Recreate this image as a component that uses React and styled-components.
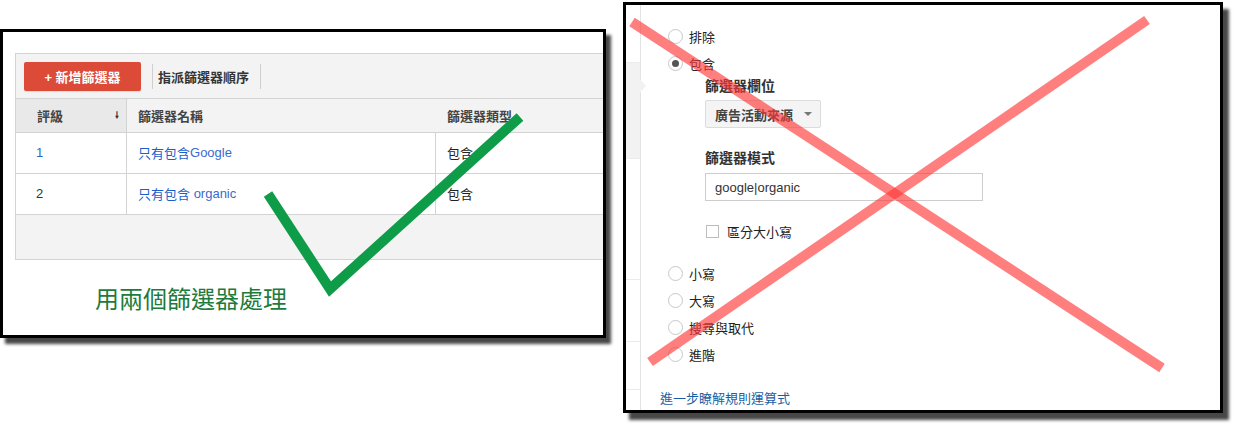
import React from 'react';
import styled, {createGlobalStyle} from 'styled-components';

const FONT = `"Liberation Sans", Arial, "Noto Sans CJK TC", sans-serif`;

const GlobalStyle = createGlobalStyle`
  body {
    margin: 0;
    background: #fff;
    font-family: ${FONT};
  }
`;

const COLUMNS = '111px 309px 1fr';

const filters = [
  {rank: '1', rankBlue: true, name: '只有包含', term: 'Google', type: '包含'},
  {rank: '2', rankBlue: false, name: '只有包含 ', term: 'organic', type: '包含'},
];

const lowerOptions = ['小寫', '大寫', '搜尋與取代', '進階'];

export default function App() {
  return (
    <Page>
      <GlobalStyle />
      <LeftPanel>
        <TableBox>
          <Toolbar>
            <AddButton>+ 新增篩選器</AddButton>
            <ToolDivider />
            <ToolLink>指派篩選器順序</ToolLink>
            <ToolDivider />
          </Toolbar>
          <HeaderRow>
            <HeaderCell $sorted>
              評級
              <SortArrow>🠗</SortArrow>
            </HeaderCell>
            <HeaderCell>篩選器名稱</HeaderCell>
            <HeaderCell>篩選器類型</HeaderCell>
          </HeaderRow>
          {filters.map(f => (
            <DataRow key={f.rank}>
              <Cell $blue={f.rankBlue}>{f.rank}</Cell>
              <Cell $blue>
                {f.name}
                <Term>{f.term}</Term>
              </Cell>
              <Cell $last>{f.type}</Cell>
            </DataRow>
          ))}
          <TableFooter />
        </TableBox>
        <Caption>用兩個篩選器處理</Caption>
        <Overlay viewBox="0 0 600 303" width="600" height="303">
          <polyline
            points="265,162 327,257 517,85"
            fill="none"
            stroke="#0f9c48"
            strokeWidth="10"
            strokeLinejoin="miter"
          />
        </Overlay>
      </LeftPanel>

      <RightPanel>
        <SideNav>
          <NavItem $h={57} />
          <NavItem $h={95} $active>
            <Notch />
          </NavItem>
          <NavItem $h={120} />
          <NavItem $h={61} />
          <NavItem $h={47} />
        </SideNav>
        <Form>
          <RadioRow>
            <Radio />
            <RadioLabel>排除</RadioLabel>
          </RadioRow>
          <RadioRow>
            <Radio $checked />
            <RadioLabel>包含</RadioLabel>
          </RadioRow>
          <Nested>
            <FieldLabel>篩選器欄位</FieldLabel>
            <Dropdown>
              廣告活動來源
              <Caret />
            </Dropdown>
            <FieldLabel $gap={21}>篩選器模式</FieldLabel>
            <TextInput>google|organic</TextInput>
            <CheckRow>
              <CheckBox />
              區分大小寫
            </CheckRow>
          </Nested>
          <RadioGroup>
            {lowerOptions.map(o => (
              <RadioRow key={o}>
                <Radio />
                <RadioLabel>{o}</RadioLabel>
              </RadioRow>
            ))}
          </RadioGroup>
          <HelpLink>進一步瞭解規則運算式</HelpLink>
        </Form>
        <Overlay viewBox="0 0 594 405" width="594" height="405">
          <line x1="6" y1="17" x2="536" y2="363" stroke="rgba(255,55,55,0.64)" strokeWidth="10" />
          <line x1="521" y1="15" x2="24" y2="357" stroke="rgba(255,55,55,0.64)" strokeWidth="10" />
        </Overlay>
      </RightPanel>
    </Page>
  );
}

const Page = styled.div`
  display: flex;
  align-items: flex-start;
  width: 1235px;
  height: 430px;
  overflow: hidden;
`;

const Panel = styled.div`
  position: relative;
  box-sizing: border-box;
  border: 3px solid #000;
  background: #fff;
  overflow: hidden;
  box-shadow: 5px 6px 3px rgba(0, 0, 0, 0.72);
`;

const LeftPanel = styled(Panel)`
  margin-top: 29px;
  width: 606px;
  height: 309px;
  padding: 21px 0 0 12px;
`;

const RightPanel = styled(Panel)`
  display: flex;
  margin-left: 17px;
  margin-top: 2px;
  width: 600px;
  height: 411px;
  box-shadow: 6px 7px 3px rgba(0, 0, 0, 0.72);
`;

const Overlay = styled.svg`
  position: absolute;
  left: 0;
  top: 0;
  pointer-events: none;
`;

const TableBox = styled.div`
  width: 640px;
  border: 1px solid #d3d3d3;
  border-right: none;
  font-size: 13px;
`;

const Toolbar = styled.div`
  display: flex;
  align-items: center;
  height: 44px;
  padding: 0 0 0 8px;
  background: #f3f3f3;
  border-bottom: 1px solid #d3d3d3;
`;

const AddButton = styled.div`
  display: flex;
  align-items: center;
  justify-content: center;
  width: 117px;
  height: 29px;
  margin-top: 1px;
  border-radius: 2px;
  background: #dc4a38;
  color: #fff;
  font-weight: bold;
  font-size: 13px;
  box-shadow: 0 1px 1px rgba(0, 0, 0, 0.1);
`;

const ToolDivider = styled.div`
  width: 1px;
  height: 25px;
  margin: 1px 8px 0 11px;
  background: #cfcfcf;
`;

const ToolLink = styled.div`
  margin-left: -3px;
  color: #333;
  font-weight: bold;
  font-size: 13px;
`;

const HeaderRow = styled.div`
  display: grid;
  grid-template-columns: ${COLUMNS};
  height: 33px;
  background: #f3f3f3;
  border-bottom: 1px solid #d3d3d3;
`;

const HeaderCell = styled.div`
  display: flex;
  align-items: center;
  padding-left: ${p => (p.$sorted ? '21px' : '11px')};
  background: ${p => (p.$sorted ? '#e9e9e9' : 'transparent')};
  border-right: ${p => (p.$sorted ? '1px solid #d3d3d3' : 'none')};
  color: #444;
  font-weight: bold;
`;

const SortArrow = styled.span`
  margin-left: auto;
  margin-right: 7px;
  font-family: "DejaVu Sans", sans-serif;
  font-size: 9px;
  font-weight: bold;
  color: #333;
`;

const DataRow = styled.div`
  display: grid;
  grid-template-columns: ${COLUMNS};
  height: 40px;
  background: #fff;
  border-bottom: 1px solid #d3d3d3;
`;

const Cell = styled.div`
  display: flex;
  align-items: center;
  padding: 0 0 2px 11px;
  border-right: ${p => (p.$last ? 'none' : '1px solid #d3d3d3')};
  color: ${p => (p.$blue ? '#1b5fcc' : '#222')};
  white-space: pre;

  &:first-child {
    padding-left: 20px;
    color: ${p => (p.$blue ? '#2a6bb5' : '#333')};
  }
`;

const Term = styled.span`
  color: #3a6ad0;
`;

const TableFooter = styled.div`
  height: 44px;
  background: #f3f3f3;
`;

const Caption = styled.div`
  margin: 24px 0 0 80px;
  color: #1d7b3c;
  font-size: 24px;
  line-height: 28px;
  font-family: "Noto Sans CJK TC", sans-serif;
`;

const SideNav = styled.div`
  display: flex;
  flex-direction: column;
  flex: 0 0 14px;
  border-right: 1px solid #e3e3e3;
`;

const NavItem = styled.div`
  position: relative;
  height: ${p => p.$h}px;
  background: ${p => (p.$active ? '#f2f2f2' : '#fff')};
  border-bottom: 1px solid #ececec;
`;

const Notch = styled.div`
  position: absolute;
  right: -6px;
  top: 16px;
  width: 0;
  height: 0;
  border-top: 7px solid transparent;
  border-bottom: 7px solid transparent;
  border-left: 6px solid #f2f2f2;
`;

const Form = styled.div`
  display: flex;
  flex-direction: column;
  padding: 18px 0 0 27px;
  font-size: 13px;
  color: #222;
`;

const RadioRow = styled.div`
  display: flex;
  align-items: center;
  height: 27px;
`;

const Radio = styled.div`
  box-sizing: border-box;
  display: flex;
  align-items: center;
  justify-content: center;
  width: 15px;
  height: 15px;
  border-radius: 50%;
  border: 1px solid #c8c8c8;
  background: #fff;

  &::after {
    content: '';
    display: ${p => (p.$checked ? 'block' : 'none')};
    width: 7px;
    height: 7px;
    border-radius: 50%;
    background: #555;
  }
`;

const RadioLabel = styled.span`
  margin-left: 6px;
`;

const Nested = styled.div`
  display: flex;
  flex-direction: column;
  align-items: flex-start;
  padding-left: 37px;
`;

const FieldLabel = styled.div`
  margin-top: ${p => p.$gap || 0}px;
  height: 18px;
  line-height: 18px;
  font-size: 14px;
  font-weight: bold;
  color: #333;
`;

const Dropdown = styled.div`
  box-sizing: border-box;
  display: flex;
  align-items: center;
  margin-top: 5px;
  width: 116px;
  height: 28px;
  padding-left: 9px;
  background: #f4f4f4;
  border: 1px solid #dcdcdc;
  border-radius: 2px;
  font-weight: bold;
  color: #444;
`;

const Caret = styled.span`
  margin-left: auto;
  margin-right: 8px;
  width: 0;
  height: 0;
  border-left: 4px solid transparent;
  border-right: 4px solid transparent;
  border-top: 4px solid #777;
`;

const TextInput = styled.div`
  box-sizing: border-box;
  display: flex;
  align-items: center;
  margin-top: 6px;
  width: 278px;
  height: 28px;
  padding-left: 9px;
  border: 1px solid #cdcdcd;
  color: #333;
`;

const CheckRow = styled.div`
  display: flex;
  align-items: center;
  gap: 8px;
  margin-top: 21px;
  height: 18px;
  padding-left: 1px;
`;

const CheckBox = styled.div`
  box-sizing: border-box;
  width: 13px;
  height: 13px;
  border: 1px solid #bdbdbd;
`;

const RadioGroup = styled.div`
  display: flex;
  flex-direction: column;
  margin-top: 20px;
`;

const HelpLink = styled.div`
  margin: 22px 0 0 -8px;
  height: 18px;
  line-height: 18px;
  color: #1a5fa5;
`;
